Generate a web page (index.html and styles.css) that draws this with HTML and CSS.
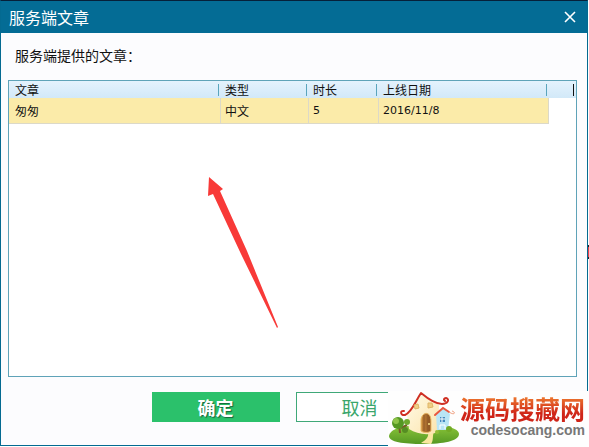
FILE: index.html
```html
<!DOCTYPE html>
<html lang="zh-CN">
<head>
    <meta charset="UTF-8">
    <meta name="viewport" content="width=device-width, initial-scale=1.0">
    <title>服务端文章</title>
    <link rel="stylesheet" href="styles.css">
</head>
<body>
    <main class="dialog">
        <header class="title-bar">
            <h1>服务端文章</h1>
            <button type="button" class="close" aria-label="关闭">
                <svg width="12" height="12" viewBox="0 0 12 12">
                    <path d="M1 1L11 11M11 1L1 11" stroke="#fff" stroke-width="1.6"/>
                </svg>
            </button>
        </header>

        <div class="content">
            <h2 id="list-title">服务端提供的文章：</h2>

            <div class="list">
                <table aria-labelledby="list-title">
                    <colgroup>
                        <col class="col-article">
                        <col class="col-type">
                        <col class="col-length">
                        <col class="col-date">
                        <col>
                    </colgroup>
                    <thead>
                        <tr>
                            <th>文章</th>
                            <th>类型</th>
                            <th>时长</th>
                            <th>上线日期</th>
                            <th class="filler"></th>
                        </tr>
                    </thead>
                    <tbody>
                        <tr>
                            <td>匆匆</td>
                            <td>中文</td>
                            <td>5</td>
                            <td>2016/11/8</td>
                            <td class="filler"></td>
                        </tr>
                    </tbody>
                </table>
                <svg class="arrow" width="72" height="152" viewBox="0 0 72 152">
                    <path d="M1 0L15 12L12 14L39 74L70 150L69 151L33 77L5 17L0 19Z" fill="#f83a38"/>
                </svg>
            </div>

            <div class="actions">
                <button type="button" class="btn btn-ok">确定</button>
                <button type="button" class="btn btn-cancel">取消</button>
            </div>
        </div>
    </main>

    <span class="edge-mark"></span>

    <!-- Site watermark -->
    <div class="watermark">
        <svg width="72" height="56" viewBox="0 0 72 56">
            <defs>
                <linearGradient id="grass" x1="0" y1="0" x2="0" y2="1">
                    <stop offset="0" stop-color="#8cc63a"/>
                    <stop offset="1" stop-color="#559823"/>
                </linearGradient>
                <linearGradient id="wall" x1="0" y1="0" x2="1" y2="1">
                    <stop offset="0" stop-color="#fffbe6"/>
                    <stop offset="1" stop-color="#fbe3ac"/>
                </linearGradient>
                <linearGradient id="door" x1="0" y1="0" x2="1" y2="0">
                    <stop offset="0" stop-color="#c98a3c"/>
                    <stop offset="1" stop-color="#8a5220"/>
                </linearGradient>
            </defs>
            <path d="M1 45C2 38 14 34 36 34C57 34 71 37 71 43C71 50 55 53 35 53C15 53 1 51 1 45Z" fill="url(#grass)"/>
            <path d="M40 41C41 46 38 49 33 52L43 53C46 49 44 45 46 41Z" fill="#f9e7a0"/>
            <path d="M19 24L33 4L51 14L50 41C40 45 29 43 21 38Z" fill="url(#wall)"/>
            <path d="M48 23L55 17L62 23L60 39L49 39Z" fill="#b9e5f5"/>
            <path d="M47 24L55 17L61 21" fill="none" stroke="#e9573f" stroke-width="2" stroke-linecap="round"/>
            <path d="M61 21C67 25 68 21 64 20" fill="none" stroke="#f0a080" stroke-width="1"/>
            <path d="M16 20C12 19 12 25 17 24C24 21 27 11 33 2C39 7 47 13 54 13C60 13 62 8 58 7C56 7 55 9 57 10" fill="none" stroke="#cf3023" stroke-width="2" stroke-linecap="round" stroke-linejoin="round"/>
            <path d="M33 40V29C34 20 43 20 43 30V40C40 42 36 42 33 40Z" fill="url(#door)" stroke="#edbd68" stroke-width="1"/>
            <path d="M36 24V40M40 24V40" stroke="#8d5726" stroke-width="1"/>
            <circle cx="41" cy="33" r="1" fill="#f8df87"/>
            <path d="M26 14L30 13L31 17L27 18ZM40 12L44 12L45 16L40 17Z" fill="#efcf86" stroke="#dfb568" stroke-width="1"/>
            <path d="M52 26H57V31H52Z" fill="#438abf"/>
            <path d="M54 26V31M52 28H57" stroke="#fff" stroke-width="1"/>
            <path d="M52 38V34H57V38" fill="none" stroke="#fff" stroke-width="1"/>
            <path d="M12 42L11 33M13 37L19 34" stroke="#78592a" stroke-width="2"/>
            <circle cx="10" cy="32" r="6" fill="#559823"/>
            <circle cx="8" cy="30" r="3" fill="#8fc44a"/>
            <circle cx="19" cy="31" r="3" fill="#6da92d"/>
            <circle cx="17" cy="39" r="3" fill="#558d23"/>
            <circle cx="61" cy="38" r="3" fill="#72aa26"/>
            <circle cx="49" cy="41" r="2" fill="#91bd36"/>
        </svg>
        <div class="watermark-text">
            <strong>源码搜藏网</strong>
            <span>codesocang.com</span>
        </div>
    </div>
</body>
</html>
```
FILE: styles.css
```css
* {
    box-sizing: border-box;
}

body {
    margin: 0;
    height: 100vh;
    padding: 0 1px 1px 0;
    background: #fff;
    font-family: "Noto Sans CJK SC", sans-serif;
    color: #111;
    overflow: hidden;
}

.dialog {
    display: flex;
    flex-direction: column;
    height: 100%;
    border: 1px solid #046a91;
    border-top-color: #062039;
    background: #fcfcfe;
}

.title-bar {
    display: flex;
    align-items: center;
    justify-content: space-between;
    height: 32px;
    padding: 0 9px 0 8px;
    background: #046c95;
    color: #fff;
}

h1, h2 {
    margin: 0;
    font-weight: normal;
}

h1 {
    font-size: 16px;
    line-height: 32px;
}

.close {
    display: flex;
    padding: 2px;
    border: none;
    background: none;
    cursor: pointer;
}

.content {
    display: flex;
    flex: 1;
    flex-direction: column;
    padding: 0 10px 0 7px;
}

h2 {
    height: 47px;
    padding: 12px 0 0 7px;
    font-size: 14px;
    line-height: 20px;
}

.list {
    position: relative;
    flex: 1;
    border: 1px solid #5fa3b8;
    background: #fff;
}

table {
    width: 100%;
    table-layout: fixed;
    border-collapse: separate;
    border-spacing: 0;
    font-size: 12px;
    line-height: 16px;
}

.col-article {
    width: 212px;
}

.col-type {
    width: 88px;
}

.col-length {
    width: 70px;
}

.col-date {
    width: 170px;
}

thead tr {
    background: linear-gradient(#e4f2fd, #d2e9f8);
}

th {
    height: 17px;
    padding: 0 0 0 4px;
    background: linear-gradient(#5aa5bd, #5aa5bd) no-repeat right 2px center / 1px 12px;
    font-weight: normal;
    text-align: left;
}

th.filler {
    background-image: linear-gradient(#111, #111);
}

td {
    height: 26px;
    padding: 0 0 0 4px;
    border-right: 1px solid #dcd9c8;
    border-bottom: 1px solid #dcd9c8;
    background: #fbeba9;
}

th:first-child, td:first-child {
    padding-left: 6px;
}

td:nth-child(3), td:nth-child(4) {
    font-family: "DejaVu Sans", sans-serif;
    font-size: 11px;
}

td.filler {
    border: none;
    background: none;
}

/* Arrow drawn over the list */
.arrow {
    position: absolute;
    top: 96px;
    left: 199px;
}

.actions {
    display: flex;
    justify-content: center;
    gap: 16px;
    padding: 15px 10px 23px 0;
}

.btn {
    width: 128px;
    height: 30px;
    padding: 0;
    border: 1px solid #2bc16b;
    font-family: inherit;
    font-size: 18px;
    line-height: 28px;
    cursor: pointer;
}

.btn-ok {
    background: #2bc16b;
    color: #fff;
    font-weight: bold;
    text-shadow: 1px 1px 1px #17643a;
}

.btn-cancel {
    border-color: #3fa878;
    background: #fff;
    color: #3aa66c;
}

.edge-mark {
    position: absolute;
    top: 245px;
    right: 0;
    width: 1px;
    height: 14px;
    border: solid #222;
    border-width: 2px 0;
    background: #e8404c;
}

.watermark {
    position: absolute;
    right: 0;
    bottom: 0;
    display: flex;
    width: 201px;
    height: 56px;
    background: #fefefe;
}

.watermark svg {
    flex: none;
}

.watermark-text {
    display: flex;
    flex-direction: column;
    align-items: flex-end;
    padding-top: 4px;
}

.watermark strong {
    background: linear-gradient(#f08030, #cf2418 70%);
    background-clip: text;
    color: transparent;
    font-size: 25px;
    font-weight: bold;
    line-height: 27px;
}

.watermark span {
    color: #777;
    font-family: "Liberation Sans", sans-serif;
    font-size: 14px;
    font-weight: bold;
    line-height: 16px;
}
```
